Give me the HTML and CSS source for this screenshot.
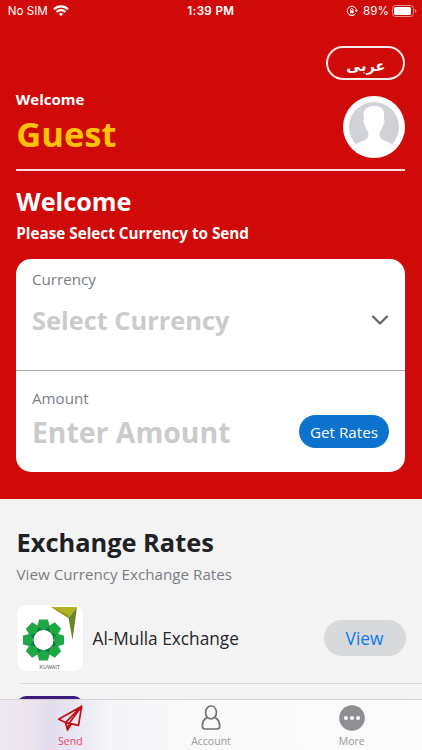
FILE: index.html
```html
<!DOCTYPE html>
<html lang="en">
<head>
<meta charset="utf-8">
<title>Send</title>
<link rel="stylesheet" href="styles.css">
</head>
<body>
<div class="app">
  <section class="hero">
    <div class="status">
      <div class="carrier"><span>No SIM</span>
        <svg width="16" height="12" viewBox="0 0 16 12" fill="none" stroke="#fff" stroke-width="2.3"><path d="M1 4.300a10 10 0 0 1 14 0M3.500 7a6.400 6.400 0 0 1 9 0"/><path d="M8 11.300 5.700 9.100a3.300 3.300 0 0 1 4.600 0z" fill="#fff" stroke="none"/></svg>
      </div>
      <div class="clock">1:39 PM</div>
      <div class="power">
        <svg width="12" height="12" viewBox="0 0 12 12" fill="none" stroke="#fff"><path d="M9.700 8.300A4.600 4.600 0 1 1 10.400 6M3 9.500a4.600 4.600 0 0 0 6.400-.8"/><path d="M8.700 5.200h3.200l-1.600 2z" fill="#fff" stroke="none"/><path d="M4.700 5.500V4.400a1.100 1.100 0 0 1 2.200 0v1.100" stroke-width=".8"/><path d="M4 5.300h3.600v2.900H4z" fill="#fff" stroke="none"/></svg>
        <span>89%</span>
        <svg width="25" height="12" viewBox="0 0 25 12"><rect x=".5" y=".5" width="21" height="11" rx="3" fill="none" stroke="#eb9090"/><rect x="2" y="2" width="17" height="8" rx="1.600" fill="#fff"/><path d="M23 4v4q1.400-.5 1.400-2T23 4" fill="#eb9090"/></svg>
      </div>
    </div>
    <div class="lang-row"><button class="lang" lang="ar">عربى</button></div>
    <div class="profile">
      <div><div class="hello">Welcome</div><div class="name">Guest</div></div>
      <svg class="avatar" width="62" height="62" viewBox="0 0 62 62"><circle cx="31" cy="31" r="31" fill="#fff"/><circle cx="31" cy="31" r="25" fill="#d0d2d8"/><path d="M31 10c-5 0-10 2-10.500 8 0 3 .5 4 .6 6-1.300.5-.6 4 .9 5 .8 4 2 5 3.200 7 .6 5-.7 7-4.200 8.500-4 1.500-6.500 2.200-8.700 4.200A26 26 0 0 0 49.700 48.700c-2.200-2-5-2.700-8.700-4.200-3.500-1.500-4.800-3.500-4.200-8.500 1.200-2 2.400-3 3.200-7 1.500-1 2.200-4.500.9-5 .3-3 .6-6-.4-9.500-1-3-4.500-4.500-9.500-4.500z" fill="#fff"/></svg>
    </div>
    <h1>Welcome</h1>
    <p class="prompt">Please Select Currency to Send</p>
    <div class="card">
      <div class="field currency">
        <label>Currency</label>
        <div class="line"><span class="value">Select Currency</span>
        <svg width="18" height="12" viewBox="0 0 18 12" fill="none" stroke="#626266" stroke-width="2.200" stroke-linecap="round" stroke-linejoin="round"><path d="M2 2.500 9 9.500 16 2.500"/></svg></div>
      </div>
      <div class="field amount">
        <label>Amount</label>
        <div class="line"><span class="value wide">Enter Amount</span><button class="rates">Get Rates</button></div>
      </div>
    </div>
  </section>
  <section class="exchange">
    <h2>Exchange Rates</h2>
    <p class="sub">View Currency Exchange Rates</p>
    <div class="row">
      <svg class="logo" width="66" height="66" viewBox="0 0 66 66"><rect width="66" height="66" rx="9" fill="#fff"/>
        <g transform="translate(26.500 35)"><circle r="12.500" fill="none" stroke="#087b4c" stroke-width="6"/>
        <g fill="#20a844"><path id="petal" d="M-4.500-20.500h9l1.800 7L0-9.500l-6.300-4z"/><use href="#petal" transform="rotate(45)"/><use href="#petal" transform="rotate(90)"/><use href="#petal" transform="rotate(135)"/><use href="#petal" transform="rotate(180)"/><use href="#petal" transform="rotate(225)"/><use href="#petal" transform="rotate(270)"/><use href="#petal" transform="rotate(315)"/></g><circle r="10" fill="#fff"/></g>
        <path d="M34 2h26l-8.500 11z" fill="#b2b321"/><path d="M34 2l17.500 8.500V13z" fill="#8d8e20"/><path d="M60 2l-4.500 33-4-22z" fill="#6b8428"/>
        <text x="22.500" y="63.500" font-size="5.500" textLength="20.500" lengthAdjust="spacingAndGlyphs" fill="#555">KUWAIT</text></svg>
      <span class="title">Al-Mulla Exchange</span>
      <button class="view">View</button>
    </div>
    <div class="row next"><svg width="66" height="66" viewBox="0 0 66 66"><rect width="66" height="66" rx="9" fill="#3c1b7c"/><path d="M26 4q6-2 12 0z" fill="#a94b6b"/></svg></div>
  </section>
  <nav class="tabs">
    <div class="tab active"><svg width="26" height="26" viewBox="0 0 26 26" fill="none" stroke="#c40d12" stroke-width="1.700" stroke-linejoin="round"><path d="M24.700 1.200 1.700 14.300 8.500 17.600 21.500 20.400zM24.700 1.200 8.500 17.600 10.500 25 14.300 19M24.700 1.200 12 18.500 10.500 25"/></svg><span>Send</span></div>
    <div class="tab"><svg width="26" height="26" viewBox="0 0 26 26" fill="none" stroke="#727276" stroke-width="1.700"><path d="M9.500 12.400a6.200 6.200 0 0 1-1.900-4.600C7.600 4 9.700 1 13 1s5.400 3 5.400 6.800a6.200 6.200 0 0 1-1.900 4.600c3.500 1.500 5.200 4.500 5.200 8.600 0 2-.8 3-2.700 3H7c-1.900 0-2.700-1-2.700-3 0-4.100 1.700-7.100 5.200-8.600 2 1.700 5 1.700 7 0"/></svg><span>Account</span></div>
    <div class="tab"><svg width="26" height="26" viewBox="0 0 26 26"><circle cx="13" cy="13" r="12.800" fill="#8e8e93"/><g fill="#fff"><circle cx="7" cy="13" r="2.100"/><circle cx="13" cy="13" r="2.100"/><circle cx="19" cy="13" r="2.100"/></g></svg><span>More</span></div>
  </nav>
</div>
</body>
</html>
```
FILE: styles.css
```css
* { box-sizing: border-box; }
body { margin: 0; font-family: "Open Sans", "Noto Sans", sans-serif; }
button { font-family: inherit; border: 0; padding: 0; }
h1, h2, p { margin: 0; white-space: nowrap; }
svg { display: block; flex: none; }
.app { height: 750px; overflow: hidden; position: relative; background: #f3f3f3; }
.hero { height: 499px; background: #cf0a08; color: #fff; padding: 0 16.700px 0 16.300px; }
.status { height: 22px; margin: 0 -8.500px; display: grid; grid-template-columns: 1fr auto 1fr; align-items: center; font: 11.600px/22px Inter, sans-serif; }
.carrier, .power { display: flex; align-items: center; gap: 5px; }
.power { justify-content: flex-end; margin-right: -3px; }
.power span { margin-right: -2px; }
.clock { font-weight: 600; letter-spacing: .35px; }
.lang-row { display: flex; justify-content: flex-end; padding-top: 24px; }
.lang { width: 79px; height: 34px; border: 2px solid #fbe8e8; border-radius: 17px; background: none; color: #fff; font: bold 14.500px/28px "DejaVu Sans", sans-serif; padding-top: 4px; }
.profile { display: flex; justify-content: space-between; height: 91px; border-bottom: 2px solid #fbdcdc; padding-top: 9px; }
.avatar { margin-top: 7px; }
.hello { font-size: 15px; font-weight: 700; line-height: 20px; margin-left: -.5px; }
.name { color: #ffc107; font-size: 34.500px; font-weight: 700; line-height: 50px; }
h1 { font-size: 25.200px; font-weight: 700; line-height: 36px; margin-top: 12px; }
.prompt { font-size: 15.250px; font-weight: 700; line-height: 20px; margin-top: 4px; }
.card { height: 213px; margin-top: 16px; background: #fff; border-radius: 15px; }
.field { padding: 10px 16.300px 0 15.600px; }
.currency { height: 112px; border-bottom: 1px solid #aaa; }
.amount { padding-top: 17px; }
label { display: block; font-size: 15.200px; line-height: 20px; color: #7a7e85; }
.line { display: flex; justify-content: space-between; align-items: center; }
.currency .line { height: 62px; }
.amount .line { height: 47px; }
.value { color: #cbcbcb; font-size: 25.400px; font-weight: 700; white-space: nowrap; }
.wide { font-size: 28.400px; }
.rates { width: 90px; height: 33px; border-radius: 17px; background: #0b73cd; color: #fff; font-size: 15.200px; }
.exchange { padding: 25px 16.500px 0; }
h2 { font-size: 25.400px; line-height: 36px; color: #202124; }
.sub { font-size: 15.200px; line-height: 20px; margin-top: 4px; color: #7a7e85; }
.row { display: flex; align-items: center; margin-top: 21px; }
.title { font-size: 17.250px; color: #242629; margin-left: 10px; white-space: nowrap; }
.view { margin-left: auto; width: 82px; height: 36px; border-radius: 18px; background: #d7d9da; color: #0b78f0; font-size: 17.300px; font-weight: 500; }
.next { margin: 12px -17px 0 3px; padding-top: 12px; border-top: 1px solid #dadada; }
.next svg { margin-left: -3px; }
.tabs { position: absolute; left: 0; right: 0; bottom: 0; height: 51px; border-top: 1px solid #d4d2d6; display: grid; grid-template-columns: repeat(3, 1fr); background: linear-gradient(90deg, #ece9f0 0, #eee4ed 28px, #e2dded 50px, #e9e6f1 75px, #f5f5f8 110px, #f9f9fa 200px, #fafafb); }
.tab { display: flex; flex-direction: column; align-items: center; padding-top: 5px; font-size: 10.500px; line-height: 15px; color: #99999d; }
.tab span { margin-top: 3px; }
.active { color: #f03e63; }
.logo { font-family: "Liberation Sans", sans-serif; }
```
